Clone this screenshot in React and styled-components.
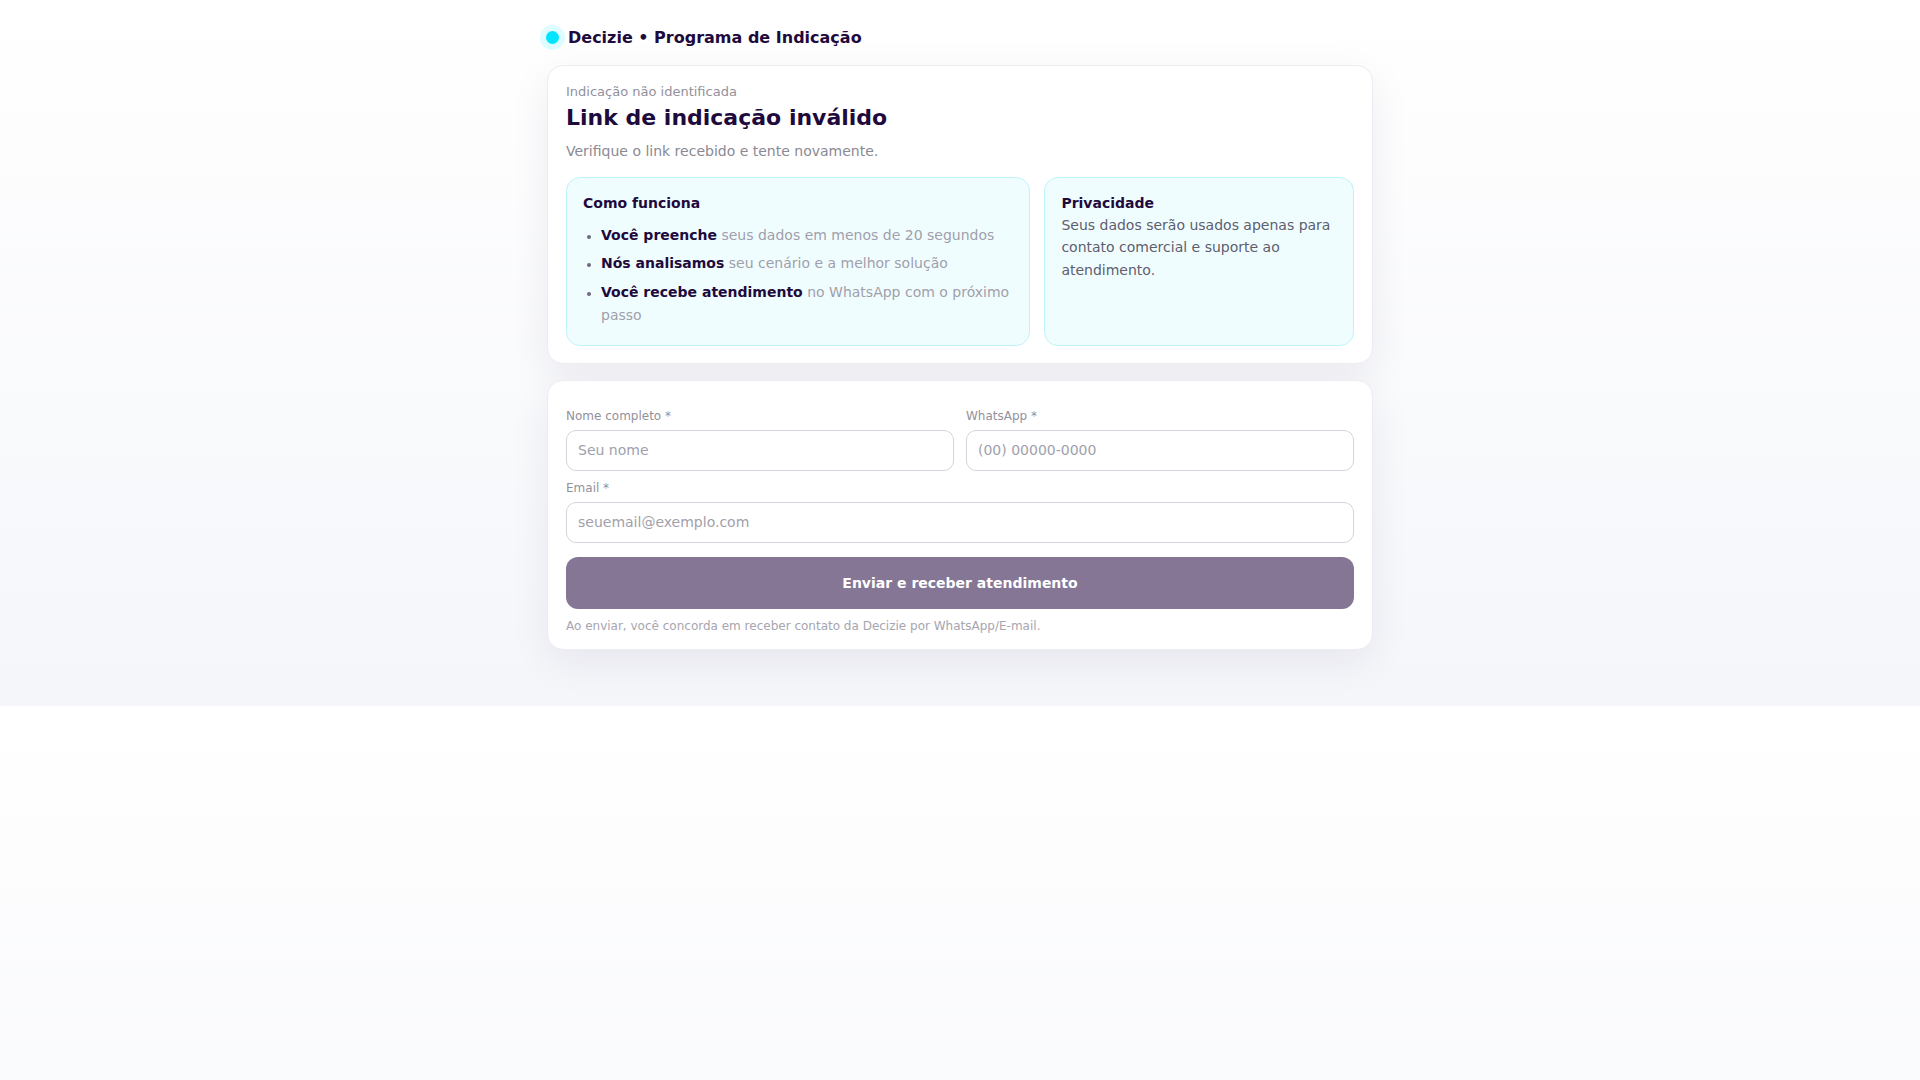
import React from 'react';
import styled, { createGlobalStyle } from 'styled-components';

const GlobalStyle = createGlobalStyle`
  * { box-sizing: border-box; }
  body {
    margin: 0;
    font-family: "DejaVu Sans", "Noto Sans", sans-serif;
    color: #1e0a3c;
    background: linear-gradient(180deg, #ffffff 0%, #f5f6fa 100%);
  }
`;

const Page = styled.main`
  width: 826px;
  margin: 0 auto;
  padding: 24px 0 56px;
`;

const Brand = styled.header`
  display: flex;
  align-items: center;
  gap: 9px;
  height: 26px;
  margin-bottom: 15px;
  font-size: 16px;
  font-weight: 700;
  color: #1e0a3c;
`;

const Dot = styled.span`
  width: 13px;
  height: 13px;
  margin-left: -1px;
  border-radius: 50%;
  background: #00e5ff;
  box-shadow: 0 0 0 6px #dcfcff;
`;

const Card = styled.section`
  background: #ffffff;
  border: 1px solid #ececf2;
  border-radius: 16px;
  box-shadow: 0 12px 40px rgba(30, 20, 70, 0.07);
  padding: ${(p) => p.$pad || '18px 18px 17px'};
  & + & {
    margin-top: 16px;
  }
`;

const Eyebrow = styled.div`
  font-size: 13px;
  line-height: 1.2;
  color: #92919c;
`;

const Title = styled.h1`
  margin: 5px 0 0;
  font-size: 22px;
  line-height: 1.2;
  font-weight: 700;
  color: #1e0a3c;
`;

const Subtitle = styled.p`
  margin: 10px 0 0;
  font-size: 14px;
  line-height: 21px;
  color: #8a8994;
`;

const InfoGrid = styled.div`
  display: grid;
  grid-template-columns: 1.5fr 1fr;
  gap: 14px;
  margin-top: 15px;
`;

const InfoBox = styled.div`
  background: #f0fdff;
  border: 1px solid #bff3fa;
  border-radius: 14px;
  padding: 15px 16px 17px;
`;

const InfoTitle = styled.div`
  font-size: 14px;
  line-height: 21px;
  font-weight: 700;
  color: #1e0a3c;
`;

const Steps = styled.ul`
  margin: 10px 0 0;
  padding-left: 18px;
  font-size: 14px;
  line-height: 23.5px;
  color: #a09fab;
  li::marker {
    color: #6d6a7c;
    font-size: 12px;
  }
  li + li {
    margin-top: 5px;
  }
  strong {
    color: #1e0a3c;
    font-weight: 700;
  }
`;

const InfoText = styled.p`
  margin: 0;
  font-size: 14px;
  line-height: 22.5px;
  color: #5e5e6e;
`;

const Form = styled.form`
  display: flex;
  flex-direction: column;
  gap: 9px;
`;

const Row = styled.div`
  display: grid;
  grid-template-columns: 1fr 1fr;
  gap: 12px;
`;

const Field = styled.label`
  display: flex;
  flex-direction: column;
  gap: 6px;
`;

const Label = styled.span`
  font-size: 12px;
  line-height: 16px;
  color: #92919c;
`;

const Input = styled.input`
  height: 41px;
  width: 100%;
  padding: 0 11px;
  border: 1px solid #d6d5de;
  border-radius: 10px;
  background: #ffffff;
  font-family: inherit;
  font-size: 14px;
  color: #1e0a3c;
  outline: none;
  &::placeholder {
    color: #a09fab;
  }
`;

const Submit = styled.button`
  margin-top: 5px;
  height: 52px;
  width: 100%;
  border: none;
  border-radius: 12px;
  background: #857696;
  color: #ffffff;
  font-family: inherit;
  font-size: 14px;
  font-weight: 700;
  cursor: pointer;
`;

const Note = styled.p`
  margin: 0;
  font-size: 12px;
  line-height: 16px;
  color: #a6a5b0;
`;

export default function App() {
  return (
    <>
      <GlobalStyle />
      <Page>
        <Brand>
          <Dot />
          Decizie • Programa de Indicação
        </Brand>

        <Card>
          <Eyebrow>Indicação não identificada</Eyebrow>
          <Title>Link de indicação inválido</Title>
          <Subtitle>Verifique o link recebido e tente novamente.</Subtitle>
          <InfoGrid>
            <InfoBox>
              <InfoTitle>Como funciona</InfoTitle>
              <Steps>
                <li><strong>Você preenche</strong> seus dados em menos de 20 segundos</li>
                <li><strong>Nós analisamos</strong> seu cenário e a melhor solução</li>
                <li><strong>Você recebe atendimento</strong> no WhatsApp com o próximo passo</li>
              </Steps>
            </InfoBox>
            <InfoBox>
              <InfoTitle>Privacidade</InfoTitle>
              <InfoText>
                Seus dados serão usados apenas para contato comercial e suporte ao atendimento.
              </InfoText>
            </InfoBox>
          </InfoGrid>
        </Card>

        <Card $pad="27px 18px 15px">
          <Form onSubmit={(e) => e.preventDefault()}>
            <Row>
              <Field>
                <Label>Nome completo *</Label>
                <Input placeholder="Seu nome" />
              </Field>
              <Field>
                <Label>WhatsApp *</Label>
                <Input placeholder="(00) 00000-0000" />
              </Field>
            </Row>
            <Field>
              <Label>Email *</Label>
              <Input placeholder="seuemail@exemplo.com" />
            </Field>
            <Submit type="submit">Enviar e receber atendimento</Submit>
            <Note>Ao enviar, você concorda em receber contato da Decizie por WhatsApp/E-mail.</Note>
          </Form>
        </Card>
      </Page>
    </>
  );
}
